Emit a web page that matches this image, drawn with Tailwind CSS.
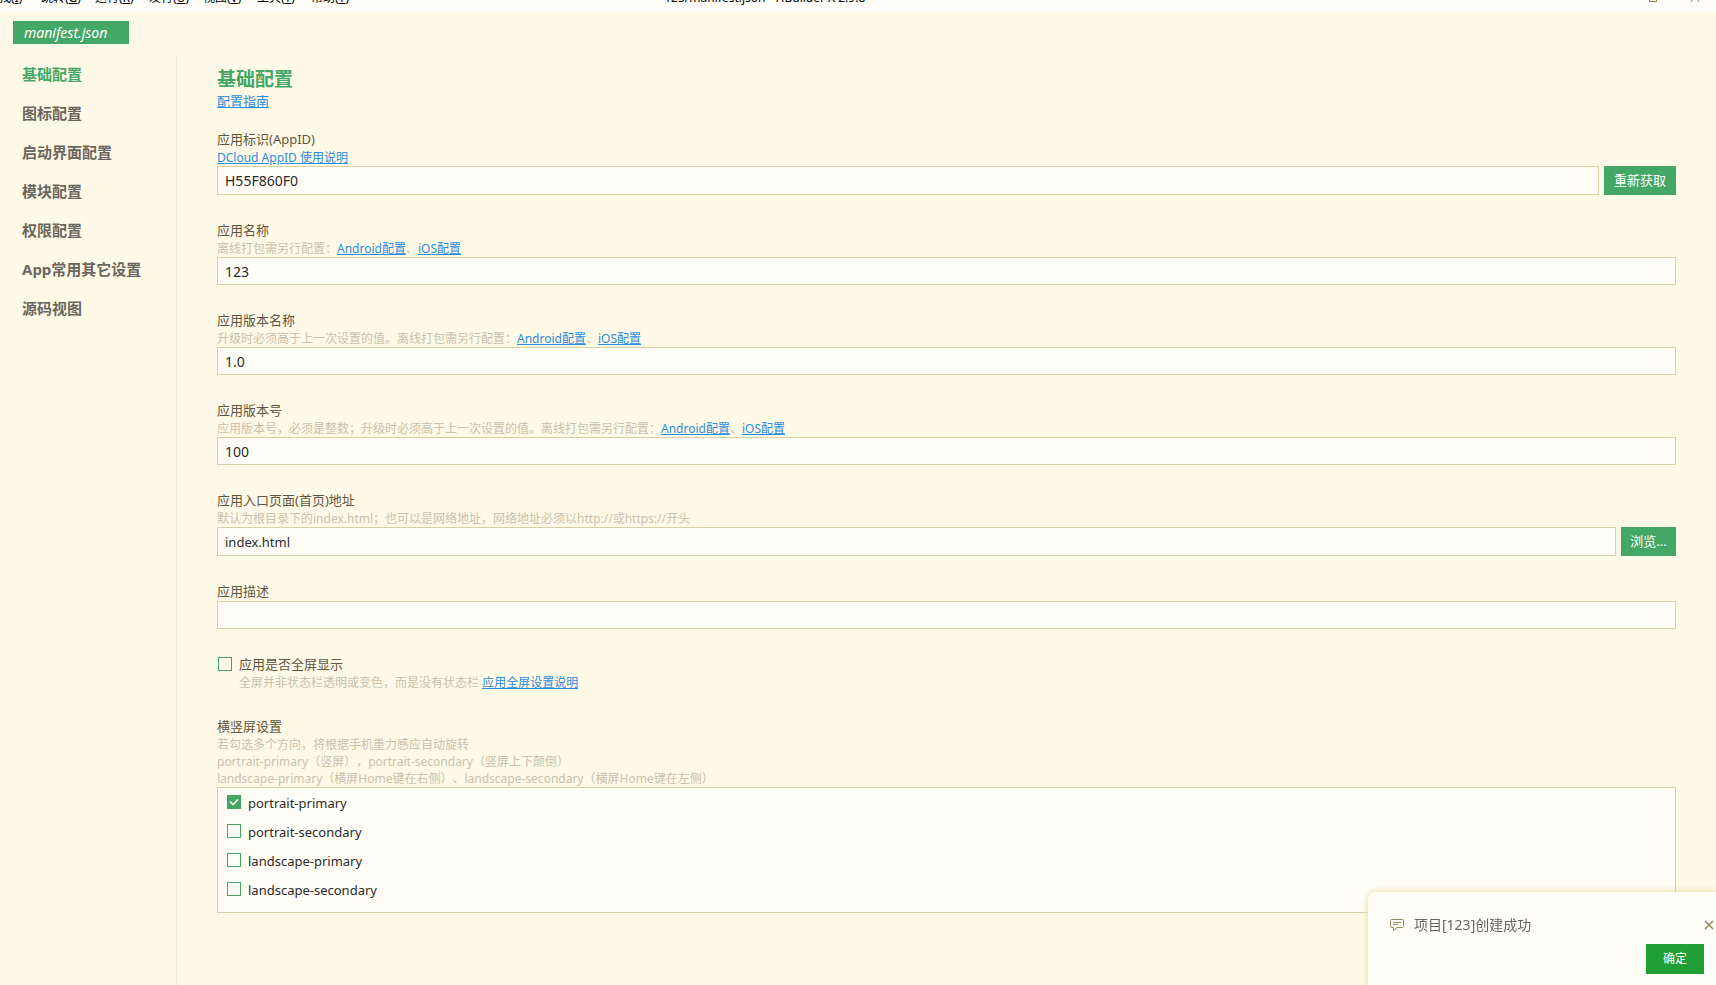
<!DOCTYPE html>
<html lang="zh-CN">
<head>
<meta charset="utf-8">
<title>123/manifest.json - HBuilder X 2.9.8</title>
<script src="https://cdn.jsdelivr.net/npm/@tailwindcss/browser@4"></script>
</head>
<body class="flex min-h-screen flex-col bg-[#fff9e7] font-['Noto_Sans','Noto_Sans_CJK_SC',sans-serif] text-[13px] text-[#5f5742] [text-spacing-trim:space-all]">

<header class="flex h-3 items-end overflow-hidden bg-[#fffdf8] pb-[6px] text-xs/4 text-black">
  <nav class="-ml-[13px] flex w-[39%] shrink-0 gap-[14px] whitespace-nowrap">
    <button class="min-w-[40px] text-left">查找(<u>I</u>)</button>
    <button class="min-w-[40px] text-left">跳转(<u>G</u>)</button>
    <button class="min-w-[40px] text-left">运行(<u>R</u>)</button>
    <button class="min-w-[40px] text-left">发行(<u>U</u>)</button>
    <button class="min-w-[40px] text-left">视图(<u>V</u>)</button>
    <button class="min-w-[40px] text-left">工具(<u>T</u>)</button>
    <button class="min-w-[40px] text-left">帮助(<u>Y</u>)</button>
  </nav>
  <p class="ml-2 whitespace-nowrap">123/manifest.json - HBuilder X 2.9.8</p>
  <div class="flex flex-1 items-end justify-end gap-8 pr-4 text-[#8c7b4b]">
    <button aria-label="最大化"><svg class="block" width="10" height="10" viewBox="0 0 10 10" fill="none" stroke="currentColor"><path d="M1.500 -1.500h7v7h-7z"/></svg></button>
    <button aria-label="关闭窗口"><svg class="block" width="10" height="10" viewBox="0 0 10 10" fill="none" stroke="currentColor"><path d="M.5-3l9 9M9.500-3l-9 9"/></svg></button>
  </div>
</header>

<div class="flex pt-[9px] pl-[13px]">
  <button class="h-[23px] w-[116px] bg-[#43a766] pl-[11px] text-left text-sm/[23px] text-white italic">manifest.json</button>
</div>

<div class="mt-[11px] flex flex-1">
  <nav class="flex w-[177px] shrink-0 flex-col border-r border-[#f3ead2] pl-[22px] text-[15px]/[39px] font-bold text-[#6b675e]">
    <a href="#base" class="text-[#43a766]">基础配置</a>
    <a href="#icon">图标配置</a>
    <a href="#splash">启动界面配置</a>
    <a href="#module">模块配置</a>
    <a href="#permission">权限配置</a>
    <a href="#other">App常用其它设置</a>
    <a href="#source">源码视图</a>
  </nav>

  <main id="base" class="min-w-0 flex-1 pt-[11px] pr-10 pb-10 pl-10">
    <h1 class="pb-px text-[19px]/[26px] font-bold text-[#43a766]">基础配置</h1>
    <p class="leading-[17px]"><a href="#guide" class="text-[#2b8ce0] underline">配置指南</a></p>

    <form class="mt-[21px] flex flex-col gap-[27px]">
      <div>
        <label for="appid" class="block pb-0.5 leading-4">应用标识(AppID)</label>
        <p class="text-xs/[17px]"><a href="#appid-help" class="text-[#2b8ce0] underline">DCloud AppID 使用说明</a></p>
        <div class="flex gap-[5px]">
          <input id="appid" value="H55F860F0" class="h-[29px] min-w-0 flex-1 border border-[#d9cea5] bg-[#fffdf6] px-[7px] text-sm text-[#2b2b2b] outline-none">
          <button type="button" class="h-[29px] bg-[#43a766] px-[10px] text-white">重新获取</button>
        </div>
      </div>

      <div>
        <label for="name" class="block pb-0.5 leading-4">应用名称</label>
        <p class="text-xs/[17px] text-[#c9c2ae]">离线打包需另行配置：<a href="#android" class="text-[#2b8ce0] underline">Android配置</a>、<a href="#ios" class="text-[#2b8ce0] underline">iOS配置</a></p>
        <input id="name" value="123" class="block h-[28px] w-full border border-[#d9cea5] bg-[#fffdf6] px-[7px] text-sm text-[#2b2b2b] outline-none">
      </div>

      <div>
        <label for="version-name" class="block pb-0.5 leading-4">应用版本名称</label>
        <p class="text-xs/[17px] text-[#c9c2ae]">升级时必须高于上一次设置的值。离线打包需另行配置：<a href="#android" class="text-[#2b8ce0] underline">Android配置</a>、<a href="#ios" class="text-[#2b8ce0] underline">iOS配置</a></p>
        <input id="version-name" value="1.0" class="block h-[28px] w-full border border-[#d9cea5] bg-[#fffdf6] px-[7px] text-sm text-[#2b2b2b] outline-none">
      </div>

      <div>
        <label for="version-code" class="block pb-0.5 leading-4">应用版本号</label>
        <p class="text-xs/[17px] text-[#c9c2ae]">应用版本号，必须是整数；升级时必须高于上一次设置的值。离线打包需另行配置：<a href="#android" class="text-[#2b8ce0] underline">Android配置</a>、<a href="#ios" class="text-[#2b8ce0] underline">iOS配置</a></p>
        <input id="version-code" value="100" class="block h-[28px] w-full border border-[#d9cea5] bg-[#fffdf6] px-[7px] text-sm text-[#2b2b2b] outline-none">
      </div>

      <div>
        <label for="entry" class="block pb-0.5 leading-4">应用入口页面(首页)地址</label>
        <p class="text-xs/[17px] text-[#c9c2ae]">默认为根目录下的index.html；也可以是网络地址，网络地址必须以http://或https://开头</p>
        <div class="flex gap-[5px]">
          <input id="entry" value="index.html" class="h-[29px] min-w-0 flex-1 border border-[#d9cea5] bg-[#fffdf6] px-[7px] text-[13px] text-[#2b2b2b] outline-none">
          <button type="button" class="h-[29px] w-[55px] bg-[#43a766] text-white">浏览...</button>
        </div>
      </div>

      <div>
        <label for="description" class="block pb-0.5 leading-4">应用描述</label>
        <input id="description" class="block h-[28px] w-full border border-[#d9cea5] bg-[#fffdf6] px-[7px] text-sm text-[#2b2b2b] outline-none">
      </div>

      <div>
        <label class="flex items-start gap-[7px] pb-0.5 pl-px leading-4">
          <input type="checkbox" class="mt-px size-[14px] appearance-none border border-[#43a766]">应用是否全屏显示
        </label>
        <p class="pl-[22px] text-xs/[17px] text-[#c9c2ae]">全屏并非状态栏透明或变色，而是没有状态栏 <a href="#fullscreen" class="text-[#2b8ce0] underline">应用全屏设置说明</a></p>
      </div>

      <fieldset>
        <legend class="pb-0.5 leading-4">横竖屏设置</legend>
        <p class="text-xs/[17px] text-[#c9c2ae]">若勾选多个方向，将根据手机重力感应自动旋转<br>portrait-primary（竖屏），portrait-secondary（竖屏上下颠倒）<br>landscape-primary（横屏Home键在右侧）、landscape-secondary（横屏Home键在左侧）</p>
        <div class="flex flex-col gap-[13px] border border-[#d9cea5] bg-[#fffdf6] pt-[7px] pb-[14px] pl-[9px] text-[13px]/[16px] text-[#2b2b2b]">
          <label class="flex gap-[7px]">
            <span class="grid size-[14px]">
              <input type="checkbox" checked class="peer col-start-1 row-start-1 size-[14px] appearance-none border border-[#43a766] checked:bg-[#43a766]">
              <svg class="pointer-events-none invisible col-start-1 row-start-1 size-[14px] peer-checked:visible" viewBox="0 0 14 14" fill="none" stroke="#fffdf6" stroke-width="1.500"><path d="M3 6.500l3 3 5-5"/></svg>
            </span>portrait-primary
          </label>
          <label class="flex gap-[7px]"><input type="checkbox" class="size-[14px] appearance-none border border-[#43a766]">portrait-secondary</label>
          <label class="flex gap-[7px]"><input type="checkbox" class="size-[14px] appearance-none border border-[#43a766]">landscape-primary</label>
          <label class="flex gap-[7px]"><input type="checkbox" class="size-[14px] appearance-none border border-[#43a766]">landscape-secondary</label>
        </div>
      </fieldset>
    </form>
  </main>
</div>

<aside role="status" class="fixed right-0 bottom-0 w-[348px] rounded-tl-lg bg-[#fffdf6]/95 pt-[23px] pb-[11px] shadow-[0_0_6px_1px_#ecdcae]">
  <div class="flex items-center pr-[2px] pl-[22px]">
    <svg width="14" height="14" viewBox="0 0 14 14" fill="none" stroke="#958a63"><path d="M1.500 1.500h11q1 0 1 1v6q0 1-1 1H7l-3.500 3v-3h-2q-1 0-1-1v-6q0-1 1-1zM3 4.500h8M3 6.500h5"/></svg>
    <p class="ml-[10px] flex-1 text-sm/5 text-[#666]">项目[123]创建成功</p>
    <button aria-label="关闭"><svg width="10" height="10" viewBox="0 0 10 10" fill="none" stroke="#8c7b4b" stroke-width="1.200"><path d="M1 1l8 8M9 1l-8 8"/></svg></button>
  </div>
  <div class="mt-[9px] flex justify-end pr-3">
    <button class="h-[30px] w-[58px] bg-[#1f9f36] text-xs text-white">确定</button>
  </div>
</aside>
</body>
</html>
